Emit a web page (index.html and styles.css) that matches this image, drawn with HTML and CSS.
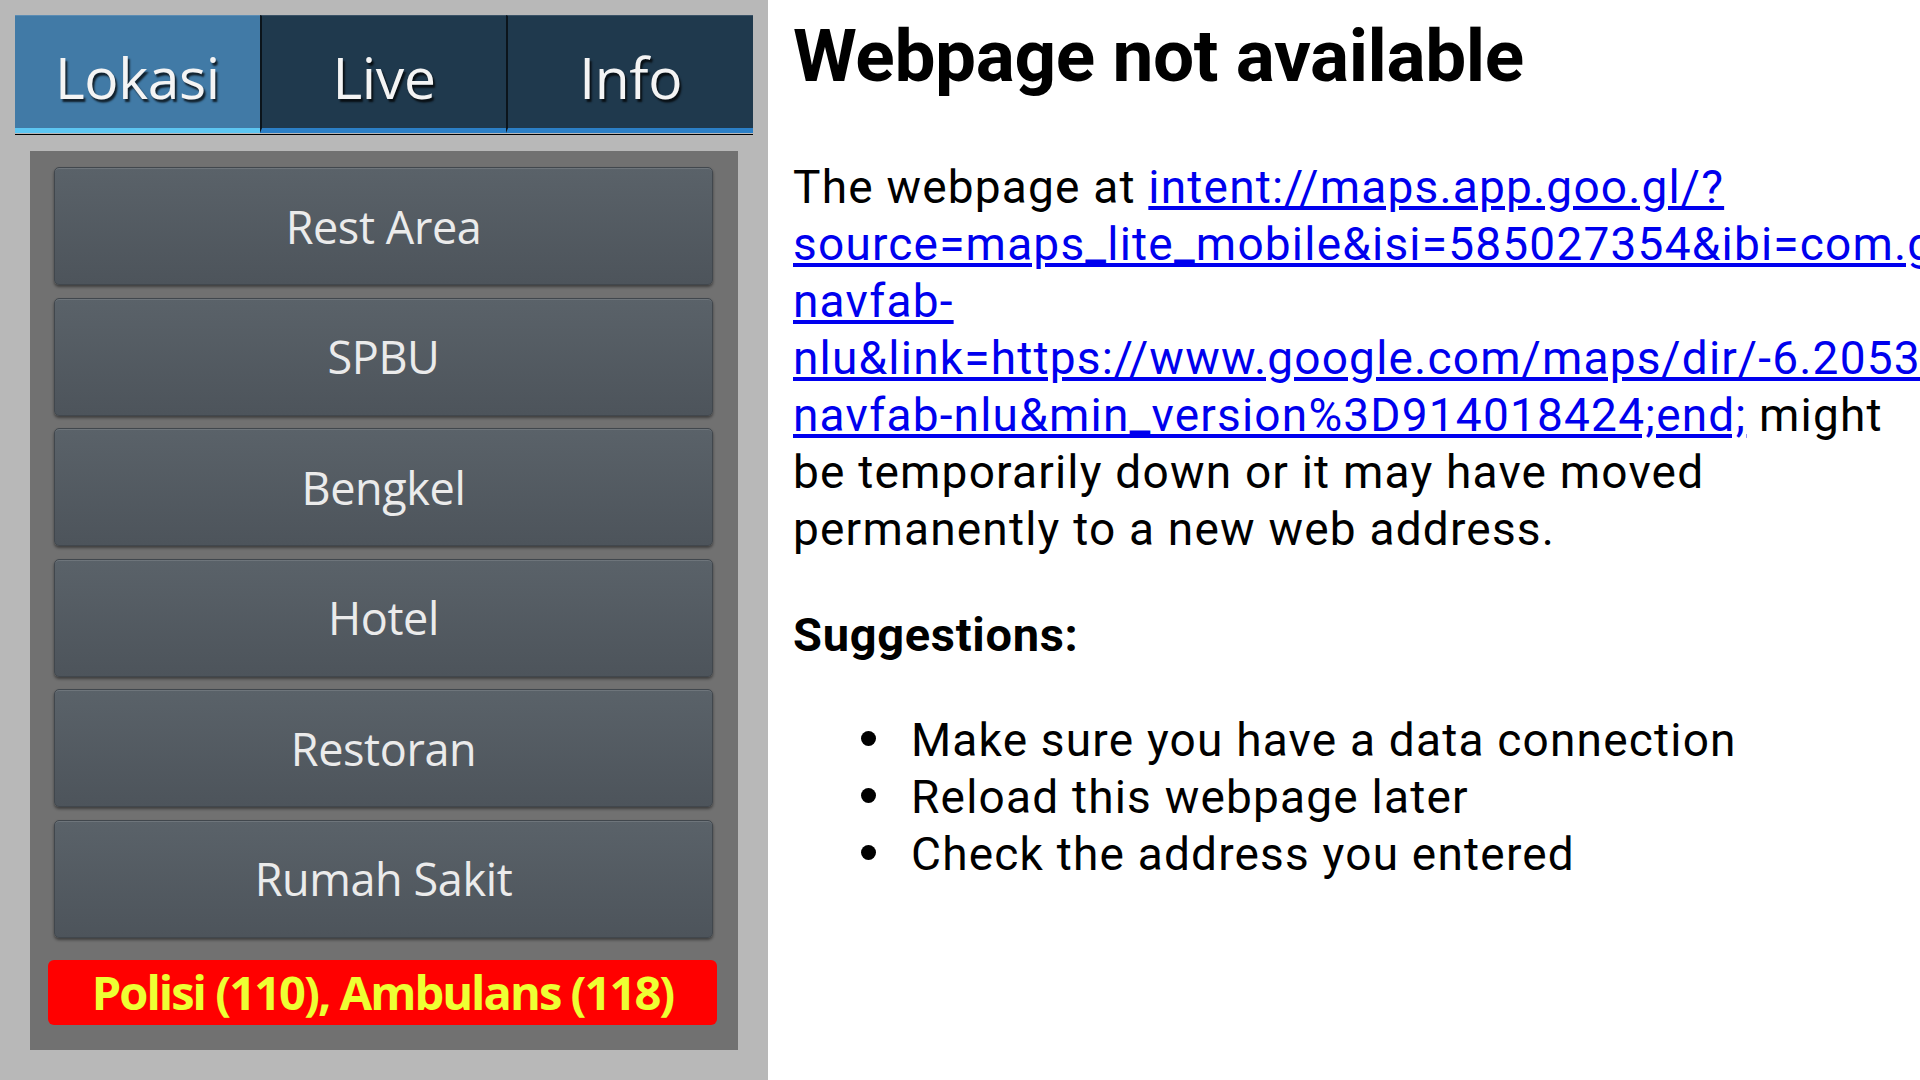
FILE: index.html
```html
<!DOCTYPE html>
<html lang="en">
<head>
<meta charset="utf-8">
<title>Webpage not available</title>
<link rel="stylesheet" href="styles.css">
</head>
<body>
<div class="screen">
  <section class="app">
    <nav class="tabs">
      <div class="tab tab-active">Lokasi</div>
      <div class="tab">Live</div>
      <div class="tab">Info</div>
    </nav>
    <div class="panel">
      <div class="btn">Rest Area</div>
      <div class="btn">SPBU</div>
      <div class="btn">Bengkel</div>
      <div class="btn">Hotel</div>
      <div class="btn">Restoran</div>
      <div class="btn">Rumah Sakit</div>
      <div class="emergency">Polisi (110), Ambulans (118)</div>
    </div>
  </section>
  <section class="web">
    <h1 class="title">Webpage not available</h1>
    <p class="msg">The webpage at <a class="url" href="#">intent://maps.app.goo.gl/?<br><span class="nowrap">source=maps_lite_mobile&amp;isi=585027354&amp;ibi=com.google.Maps&amp;ius=comgooglemapsurl&amp;apn=com.google.android.apps.maps&amp;utm_campaign=</span><br>navfab-<br><span class="nowrap">nlu&amp;link=https://www.google.com/maps/dir/-6.2053123,106.8456789/&amp;utm_source=</span><br>navfab-nlu&amp;min_version%3D914018424;end;</a> might be temporarily down or it may have moved permanently to a new web address.</p>
    <h2 class="sub">Suggestions:</h2>
    <ul class="tips">
      <li class="tip">Make sure you have a data connection</li>
      <li class="tip">Reload this webpage later</li>
      <li class="tip">Check the address you entered</li>
    </ul>
  </section>
</div>
</body>
</html>
```
FILE: styles.css
```css
html, body {
  margin: 0;
  padding: 0;
  width: 1920px;
  height: 1080px;
  overflow: hidden;
  background: #ffffff;
}

.screen {
  display: flex;
  width: 1920px;
  height: 1080px;
}

/* ---------- left app ---------- */
.app {
  width: 768px;
  flex: none;
  box-sizing: border-box;
  padding: 15px 15px 0 15px;
  background: #b8b8b8;
  font-family: "Open Sans", "DejaVu Sans", sans-serif;
}

.tabs {
  display: flex;
  border-bottom: 1px solid #000;
  height: 119px;
}

.tab {
  flex: 1 1 0;
  box-sizing: border-box;
  height: 118px;
  padding-top: 10px;
  display: flex;
  align-items: center;
  justify-content: center;
  background: #1f394d;
  border-top: 1px solid #3a5266;
  border-bottom: 5px solid #2b7fc6;
  color: #f4f4f4;
  font-size: 57px;
  letter-spacing: -0.4px;
  text-shadow: 2px 3px 2px rgba(0, 0, 0, 0.75);
}

.tab + .tab {
  border-left: 2px solid #0b141b;
}

.tab-active {
  background: #417aa6;
  border-top-color: #5b8cb3;
  border-bottom-color: #5cc6f2;
}

.panel {
  margin: 16px 15px 0 15px;
  padding: 16px 25px 25px 24px;
  background: #717171;
  display: flex;
  flex-direction: column;
  gap: 12.6px;
}

.btn {
  box-sizing: border-box;
  height: 118px;
  display: flex;
  align-items: center;
  justify-content: center;
  border: 1px solid #41474d;
  border-radius: 5px;
  background: linear-gradient(#5a6269, #4d545b);
  box-shadow: inset 0 1px 0 rgba(255, 255, 255, 0.12), 0 2px 3px rgba(0, 0, 0, 0.45);
  color: #ebebeb;
  font-size: 45px;
  letter-spacing: -0.4px;
}

.emergency {
  margin: 9.4px -4px 0 -6px;
  height: 65px;
  display: flex;
  align-items: center;
  justify-content: center;
  border-radius: 6px;
  background: #ff0000;
  color: #eeff33;
  font-weight: 700;
  font-size: 47px;
  letter-spacing: -1.95px;
}

/* ---------- right web error page ---------- */
.web {
  flex: 1 1 auto;
  min-width: 0;
  box-sizing: border-box;
  padding: 0 18px 0 25px;
  overflow: hidden;
  font-family: Roboto, "Noto Sans", sans-serif;
  color: #000;
}

.title {
  margin: 13px 0 0 0;
  font-size: 73px;
  line-height: 86px;
  font-weight: 700;
  letter-spacing: -0.4px;
}

.msg {
  margin: 60px 0 0 0;
  font-size: 46px;
  line-height: 57px;
  letter-spacing: 1.2px;
}

.url {
  color: #0000ee;
  text-decoration: underline;
}

.nowrap {
  white-space: nowrap;
}

.sub {
  margin: 47.6px 0 0 0;
  font-size: 47px;
  line-height: 57px;
  font-weight: 700;
  letter-spacing: 0.7px;
}

.tips {
  list-style: none;
  margin: 49.4px 0 0 0;
  padding: 0 0 0 68px;
  font-size: 46px;
  line-height: 57px;
  letter-spacing: 1.2px;
}

.tip::before {
  content: "";
  display: inline-block;
  width: 15px;
  height: 15px;
  margin: 0 35px 9.5px 0;
  border-radius: 50%;
  background: #000;
  vertical-align: baseline;
}
```
